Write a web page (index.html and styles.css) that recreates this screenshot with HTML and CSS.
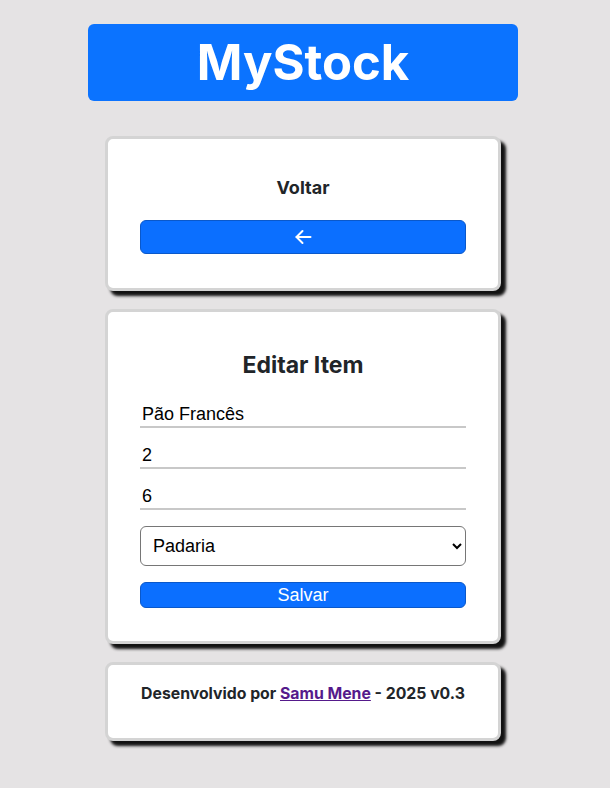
FILE: index.html
```html
<!DOCTYPE html>
<html lang="pt-BR">
<head>
<meta charset="utf-8">
<title>MyStock</title>
<link rel="stylesheet" href="styles.css">
</head>
<body>
<div class="page">
  <header class="brand">MyStock</header>

  <section class="card card-back">
    <h3 class="card-title">Voltar</h3>
    <button class="btn btn-back" type="button" aria-label="Voltar">
      <svg class="arrow" width="18" height="16" viewBox="0 0 18 16" fill="none" stroke="#fff" stroke-width="2" stroke-linecap="round" stroke-linejoin="round">
        <path d="M16.5 8H2.5"/>
        <path d="M8.5 2L2.5 8L8.5 14"/>
      </svg>
    </button>
  </section>

  <section class="card card-form">
    <h2 class="form-title">Editar Item</h2>
    <input class="field" type="text" value="Pão Francês">
    <input class="field" type="text" value="2">
    <input class="field" type="text" value="6">
    <select class="select">
      <option>Padaria</option>
    </select>
    <button class="btn btn-save" type="button">Salvar</button>
  </section>

  <footer class="card card-footer">
    <p class="credits">Desenvolvido por <a class="author" href="#">Samu Mene</a> - 2025 v0.3</p>
  </footer>
</div>
</body>
</html>
```

FILE: styles.css
```css
* { box-sizing: border-box; }

html, body { min-height: 100%; }

body {
  margin: 0;
  background: #e5e3e4;
  font-family: Inter, "Liberation Sans", Arial, sans-serif;
  color: #212529;
}

.page {
  width: 606px;
  padding: 24px 0 40px;
  display: flex;
  flex-direction: column;
  align-items: center;
}

.brand {
  width: 430px;
  height: 77px;
  background: #0b73ff;
  border-radius: 6px;
  color: #fff;
  font-weight: 700;
  font-size: 49px;
  line-height: 77px;
  text-align: center;
  letter-spacing: 0;
}

.card {
  width: 396px;
  background: #fff;
  border: 3px solid #d4d4d4;
  border-radius: 8px;
  box-shadow: 5px 5px 3px rgba(0, 0, 0, 0.92);
  padding: 34px 32px;
  display: flex;
  flex-direction: column;
}

.card-back { margin-top: 35px; }
.card-form { margin-top: 18px; padding-bottom: 33px; }
.card-footer { margin-top: 18px; padding: 19px 32px 34px; }

.card-title {
  margin: 4px 0 21px;
  font-size: 18px;
  line-height: 22px;
  font-weight: 700;
  text-align: center;
}

.btn {
  width: 100%;
  background: #0b6fff;
  border: 1px solid #0a58ca;
  border-radius: 6px;
  color: #fff;
  padding: 0;
  display: flex;
  align-items: center;
  justify-content: center;
}

.btn-back { height: 34px; }

.arrow { display: block; }

.form-title {
  margin: 5px 0 20px;
  font-size: 23px;
  line-height: 28px;
  font-weight: 700;
  text-align: center;
}

.field {
  display: block;
  width: 100%;
  height: 29px;
  margin: 0 0 12px;
  padding: 3px 2px 0;
  border: none;
  border-bottom: 2px solid #c8c8c8;
  font-family: "Liberation Sans", Arial, sans-serif;
  font-size: 18px;
  color: #000;
  background: transparent;
  outline: none;
}

.field:nth-of-type(3) { margin-bottom: 16px; }

.select {
  width: 100%;
  height: 40px;
  padding: 0 8px 0 8px;
  border: 1px solid #767676;
  border-radius: 6px;
  background: #fff;
  font-family: "Liberation Sans", Arial, sans-serif;
  font-size: 18px;
  color: #000;
  margin-bottom: 16px;
}

.btn-save {
  height: 26px;
  font-family: "Liberation Sans", Arial, sans-serif;
  font-size: 18px;
}

.credits {
  margin: 0;
  font-size: 15.8px;
  line-height: 20px;
  font-weight: 700;
  text-align: center;
  white-space: nowrap;
}

.author { color: #551a8b; }
```
